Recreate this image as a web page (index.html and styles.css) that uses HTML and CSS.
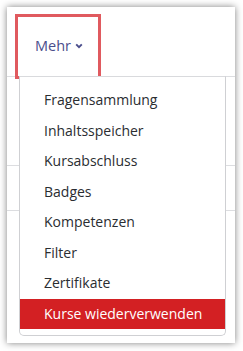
FILE: index.html
```html
<!DOCTYPE html>
<html lang="de">
<head>
  <meta charset="UTF-8" />
  <title>Mehr</title>
  <link rel="stylesheet" href="styles.css">
</head>
<body>

  <div class="panel">

    <!-- secondary navigation -->
    <div class="nav">
      <div class="tab">
        <span class="tab-label">Mehr</span>
        <svg class="chevron" width="8" height="6" viewBox="0 0 8 6">
          <path d="M1.2 1.3 L4 4.1 L6.8 1.3" fill="none" stroke="#4b4e8c" stroke-width="1.9"/>
        </svg>
      </div>
    </div>

    <div class="row row-tall"></div>
    <div class="row"></div>

    <ul class="dropdown">
      <li>Fragensammlung</li>
      <li>Inhaltsspeicher</li>
      <li>Kursabschluss</li>
      <li>Badges</li>
      <li>Kompetenzen</li>
      <li>Filter</li>
      <li>Zertifikate</li>
      <li class="active">Kurse wiederverwenden</li>
    </ul>

  </div>

</body>
</html>
```

FILE: styles.css
```css
body {
  margin: 0;
  background: #fff;
  font-family: "Segoe UI", "Open Sans", sans-serif;
  padding: 7px 8px 8px 7px;
}

.panel {
  position: relative;
  width: 228px;
  height: 336px;
  background: #fff;
  box-shadow: 0 0 7px rgba(0,0,0,0.5);
}

.nav {
  display: flex;
  padding: 7px 0 0 8px;
  border-bottom: 1px solid #dcdde0;
}

.tab {
  display: flex;
  align-items: center;
  gap: 4px;
  width: 86px;
  height: 65px;
  margin-bottom: -3px;
  box-sizing: border-box;
  border: 3px solid #e05a5f;
  padding: 0 0 2px 17px;
  position: relative;
  z-index: 1;
}

.tab-label {
  font-size: 14.5px;
  color: #4b4e8c;
}

.chevron { margin-top: 1px; }

.row {
  height: 44px;
  border-bottom: 1px solid #dcdde0;
}
.row-tall { height: 88px; }

.dropdown {
  position: absolute;
  top: 69px;
  left: 12px;
  width: 207px;
  box-sizing: border-box;
  margin: 0;
  padding: 8px 0 6px;
  list-style: none;
  background: #fff;
  border: 1px solid #cfd0d3;
  border-top-color: #d9dadd;
  border-radius: 0 0 5px 5px;
  z-index: 2;
}

.dropdown li {
  font-size: 14px;
  line-height: 22.5px;
  padding: 4px 24px;
  color: #2a2d31;
  white-space: nowrap;
}

.dropdown li.active {
  background: #d32023;
  color: #fff;
}
```
